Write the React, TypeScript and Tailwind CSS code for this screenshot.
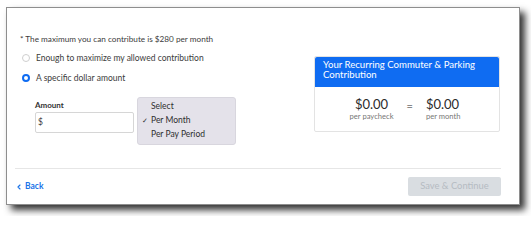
import React from "react";
import { ChevronLeft } from "lucide-react";

function Radio({ checked }: { checked?: boolean }) {
  return checked ? (
    <span className="w-[8px] h-[8px] rounded-full border-[2.5px] border-[#0f6cf2] bg-white box-border shrink-0" />
  ) : (
    <span className="w-[8px] h-[8px] rounded-full border border-[#cfcfcf] bg-white box-border shrink-0" />
  );
}

export default function App() {
  return (
    <div
      className="w-[531px] h-[216px] bg-white overflow-hidden pt-[7px] pl-[6px]"
      style={{ fontFamily: "Lato, 'Noto Sans', sans-serif" }}
    >
      <div className="w-[514px] h-[198px] border border-[#8e8e8e] bg-white shadow-[5px_5px_7px_rgba(0,0,0,0.8)] flex flex-col text-[#3b3b3b]">
        <div className="flex items-start h-[137px]">
          <div className="pl-[13px] pt-[26px] w-[300px] flex flex-col">
            <div className="h-[10px] leading-[10px] text-[8.2px] text-[#3b3b3b]">* The maximum you can contribute is $280 per month</div>
            <div className="mt-[8px] h-[12px] flex items-center gap-[6px] pl-[2px] text-[8.5px]">
              <Radio />
              <span>Enough to maximize my allowed contribution</span>
            </div>
            <div className="mt-[8px] h-[12px] flex items-center gap-[6px] pl-[2px] text-[8.5px]">
              <Radio checked />
              <span>A specific dollar amount</span>
            </div>
            <div className="mt-[13px] flex items-start">
              <div className="ml-[15px] w-[99px] flex flex-col pt-[3px]">
                <div className="h-[10px] leading-[10px] text-[8px] font-bold text-[#333]">Amount</div>
                <div className="mt-[2px] h-[21px] border border-[#d6d6d6] rounded-[2px] bg-white flex items-center pl-[2px] text-[8.5px]">
                  $
                </div>
              </div>
              <div className="ml-[3px] w-[99px] h-[48px] rounded-[3px] bg-[#e4e2ea] border border-[#d8d6de] pt-[1px] text-[8.5px] text-[#2e2e2e]">
                <div className="h-[14px] flex items-center pl-[13px]">Select</div>
                <div className="h-[14px] flex items-center pl-[4px]">
                  <span className="w-[9px] text-[7px]">✓</span>
                  <span>Per Month</span>
                </div>
                <div className="h-[14px] flex items-center pl-[13px]">Per Pay Period</div>
              </div>
            </div>
          </div>
          <div className="ml-[7px] mt-[48px] w-[186px] h-[76px] border border-[#e3e3e3] rounded-[2px] flex flex-col">
            <div className="h-[30px] bg-[#0f6cf2] rounded-t-[2px] pl-[8px] pt-[3px] text-white text-[9.6px] leading-[10px]">
              <div>Your Recurring Commuter &amp; Parking</div>
              <div>Contribution</div>
            </div>
            <div className="flex-1 flex items-center justify-center gap-[13px] pb-[2px] pr-[4px]">
              <div className="flex flex-col items-center">
                <span className="text-[13px] leading-[16px] text-[#2b2b2b]">$0.00</span>
                <span className="text-[7.6px] leading-[9px] text-[#777]">per paycheck</span>
              </div>
              <span className="text-[11px] text-[#888] mb-[4px]">=</span>
              <div className="flex flex-col items-start">
                <span className="text-[13px] leading-[16px] text-[#2b2b2b]">$0.00</span>
                <span className="text-[7.6px] leading-[9px] text-[#777]">per month</span>
              </div>
            </div>
          </div>
        </div>
        <div className="mt-[23px] ml-[8px] w-[486px] h-px bg-[#e6e6e6]" />
        <div className="mt-[8px] ml-[8px] w-[486px] flex items-center justify-between">
          <span className="text-[8.5px] font-bold text-[#1a73e8] flex items-center gap-[2px]">
            <ChevronLeft size={8} strokeWidth={3.5} />
            Back
          </span>
          <div className="w-[93px] h-[19px] rounded-[2px] bg-[#d9dde1] text-[#b5bbc1] text-[9.4px] flex items-center justify-center">
            Save &amp; Continue
          </div>
        </div>
      </div>
    </div>
  );
}
